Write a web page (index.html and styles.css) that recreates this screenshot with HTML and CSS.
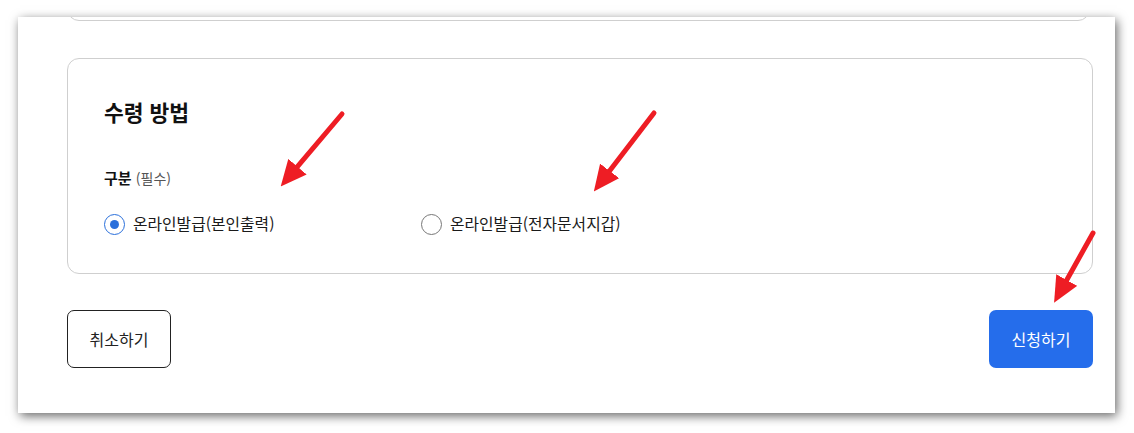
FILE: index.html
```html
<!DOCTYPE html>
<html lang="ko">
  <head>
    <meta charset="UTF-8">
    <title>수령 방법</title>
    <link rel="stylesheet" href="styles.css">
  </head>
  <body>
    <div class="window">
      <div class="prev-card"></div>

      <section class="card">
        <h2 class="card-title">수령 방법</h2>
        <div class="field-label">구분 <span class="required">(필수)</span></div>
        <div class="radio-group">
          <label class="radio checked"><span class="radio-mark"></span>온라인발급(본인출력)</label>
          <label class="radio"><span class="radio-mark"></span>온라인발급(전자문서지갑)</label>
        </div>
      </section>

      <div class="actions">
        <button class="btn btn-cancel">취소하기</button>
        <button class="btn btn-submit">신청하기</button>
      </div>
    </div>

    <!-- annotation arrows -->
    <svg class="arrows" width="1134" height="433" viewBox="0 0 1134 433">
      <defs>
        <marker id="head" markerUnits="userSpaceOnUse" markerWidth="26" markerHeight="24" viewBox="0 0 26 24" refX="4" refY="12" orient="auto">
          <path d="M0,0 L26,12 L0,24 Z" fill="#ee1d24"/>
        </marker>
      </defs>
      <line x1="342" y1="114" x2="294.9" y2="169.7" marker-end="url(#head)"/>
      <line x1="654" y1="113" x2="607.2" y2="174.1" marker-end="url(#head)"/>
      <line x1="1093" y1="233" x2="1064.8" y2="283.5" marker-end="url(#head)"/>
    </svg>
  </body>
</html>
```

FILE: styles.css
```css
body {
  margin: 0;
  background-color: #fff;
  font-family: "Noto Sans CJK KR", "Noto Sans", sans-serif;
  color: #111;
  padding: 17px 0 0 18px;
  width: 1134px;
  height: 433px;
  box-sizing: border-box;
  position: relative;
  overflow: hidden;
}

.window {
  width: 1097px;
  height: 396px;
  background-color: #fff;
  box-shadow: 2px 3px 10px rgba(0, 0, 0, 0.6);
  overflow: hidden;
  padding: 0 22px 0 49px;
  box-sizing: border-box;
}

.prev-card {
  height: 40px;
  box-sizing: border-box;
  margin-top: -36px;
  border: 1px solid #cfcfcf;
  border-radius: 12px;
  margin-right: 3px;
}

.card {
  margin-top: 37px;
  height: 216px;
  box-sizing: border-box;
  border: 1px solid #cfcfcf;
  border-radius: 12px;
  padding: 38px 36px 0;
}

.card-title {
  margin: 0;
  font-size: 21.5px;
  line-height: 30px;
  font-weight: 700;
}

.field-label {
  margin-top: 40px;
  font-size: 15px;
  line-height: 22px;
  font-weight: 700;
}

.required {
  font-size: 14px;
  font-weight: 400;
  color: #555;
}

.radio-group {
  display: grid;
  grid-template-columns: 317px 317px;
  margin-top: 24px;
}

.radio {
  display: flex;
  align-items: center;
  gap: 8px;
  font-size: 15.8px;
  line-height: 22px;
  color: #1a1a1a;
}

.radio-mark {
  width: 21px;
  height: 21px;
  box-sizing: border-box;
  border: 1.5px solid #777;
  border-radius: 50%;
  display: flex;
  align-items: center;
  justify-content: center;
}

.radio.checked .radio-mark {
  border-color: #2a6fdb;
}

.radio.checked .radio-mark::after {
  content: "";
  width: 9px;
  height: 9px;
  border-radius: 50%;
  background-color: #2a6fdb;
}

.actions {
  display: flex;
  justify-content: space-between;
  margin-top: 36px;
}

.btn {
  width: 104px;
  height: 58px;
  border-radius: 7px;
  font-family: inherit;
  font-size: 16px;
  cursor: pointer;
}

.btn-cancel {
  background-color: #fff;
  border: 1px solid #222;
  color: #222;
}

.btn-submit {
  background-color: #256deb;
  border: none;
  color: #fff;
}

.arrows {
  position: absolute;
  left: 0;
  top: 0;
  pointer-events: none;
}

.arrows line {
  stroke: #ee1d24;
  stroke-width: 5;
  stroke-linecap: round;
}
```
